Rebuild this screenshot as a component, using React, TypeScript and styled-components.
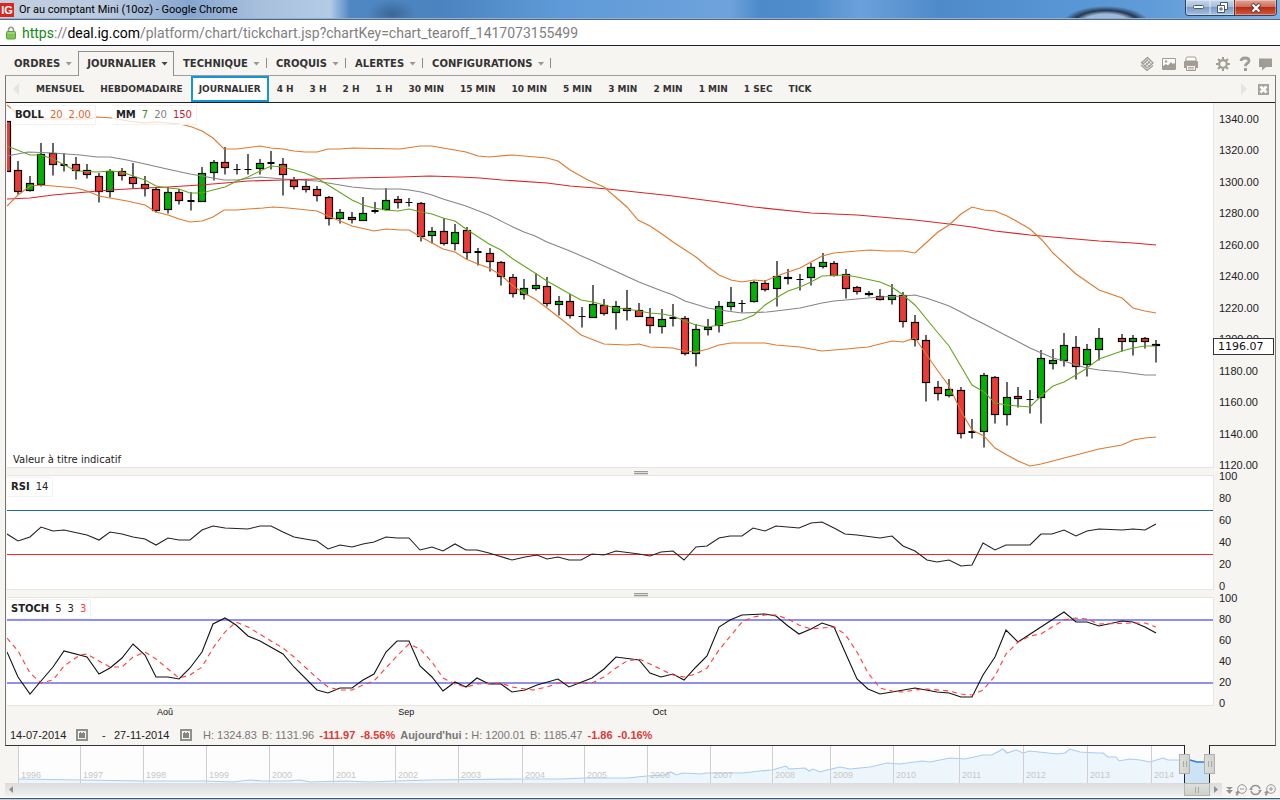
import React from "react";
import styled, { createGlobalStyle } from "styled-components";

const sans = `"Liberation Sans", Arial, sans-serif`;
const wide = `"DejaVu Sans", Verdana, sans-serif`;
const chrome = `Roboto, "Segoe UI", sans-serif`;
const paper = "#f7f5f2";
const iconGrey = "#a19d95";

const GlobalStyle = createGlobalStyle`
  * { box-sizing: border-box; }
  html, body { margin: 0; padding: 0; background: ${paper}; }
  button { background: none; border: 0; padding: 0; margin: 0; color: inherit; font: inherit; cursor: pointer; }
  svg { display: block; }
`;

const Window = styled.div`
  display: flex;
  flex-direction: column;
  min-height: 100vh;
  background: ${paper};
  font-family: ${sans};
  font-size: 11px;
  color: #222;
`;

/* ---------- browser chrome ---------- */

const TitleBar = styled.header`
  display: flex;
  align-items: flex-start;
  height: 20px;
  border-bottom: 1px solid #56667e;
  box-shadow: inset 0 -1px 0 #8fb0d8;
  background:
    radial-gradient(ellipse 44px 18px at 1106px 24px, #9dbbdc 0 55%, #26384f 75%, transparent 100%) no-repeat,
    radial-gradient(ellipse 24px 14px at 392px 14px, #3b6796 0, transparent 100%) no-repeat,
    linear-gradient(90deg, #c3d0e0 0, #b9c9de 110px, #86a5cf 190px, #a9c0dd 260px, #b4cbe6 330px, #4f87c2 350px, #4a83bf 440px,
      #5f9ad8 560px, #6ea3dc 730px, #4d8ac9 760px, #4f8dcc 810px, #6ba1db 860px, #4e8aca 940px, #5795d5 1060px, #5f9bd8 1150px, #80b2e4 100%);
`;

const Logo = styled.span`
  width: 14px;
  height: 14px;
  margin-top: 3px;
  background: #d8281d;
  color: #fff;
  font: bold 11px/14px ${sans};
  text-align: center;
`;

const Title = styled.h1`
  flex: 1;
  margin: 0;
  padding-left: 5px;
  font: 11px/19px ${chrome};
  color: #000;
  white-space: nowrap;
`;

const WindowButtons = styled.div`
  display: flex;
  height: 16px;
  margin-right: 3px;
  border: 1px solid #33435a;
  border-top: 0;
  border-radius: 0 0 4px 4px;
  overflow: hidden;
`;

const WindowButton = styled.button<{ $close?: boolean }>`
  display: flex;
  align-items: center;
  justify-content: center;
  width: ${(p) => (p.$close ? 42 : 24)}px;
  height: 15px;
  border-left: ${(p) => (p.$close ? "1px solid #7a2b22" : "0")};
  box-shadow: inset 0 0 0 1px rgba(255, 255, 255, 0.35);
  background: ${(p) =>
    p.$close
      ? "linear-gradient(#e0a596 0, #cf6e5b 45%, #b52e16 50%, #d35a3e 100%)"
      : "linear-gradient(#c7d8ec 0, #a5bedb 45%, #7c9cc2 50%, #a2c1e2 100%)"};
`;

const AddressBar = styled.div`
  display: flex;
  align-items: center;
  gap: 6px;
  height: 26px;
  padding-left: 6px;
  background: #fff;
  border-bottom: 1px solid #1d222c;
`;

const Url = styled.div`
  font: 14px/24px ${chrome};
  color: #808080;
  white-space: nowrap;
  b { font-weight: 400; color: #000; }
  em { font-style: normal; color: #128a12; }
`;

/* ---------- menus ---------- */

const MenuBar = styled.nav`
  display: flex;
  align-items: flex-end;
  height: 30px;
  padding: 0 7px 0 5px;
  margin-bottom: -1px;
  position: relative;
  font: bold 10px/23px ${wide};
  color: #333;
`;

const MenuItem = styled.button<{ $active?: boolean }>`
  display: flex;
  align-items: center;
  gap: 5px;
  padding: 0 5px 0 8px;
  border: 1px solid ${(p) => (p.$active ? "#8c918a" : "transparent")};
  border-bottom: 0;
  background: ${paper};
  height: ${(p) => (p.$active ? 25 : 24)}px;
  margin-bottom: ${(p) => (p.$active ? 0 : 1)}px;
  padding-bottom: ${(p) => (p.$active ? 1 : 0)}px;
`;

const Caret = styled.span<{ $dark?: boolean }>`
  width: 7px;
  height: 4px;
  background: ${(p) => (p.$dark ? "#444" : "#9a978f")};
  clip-path: polygon(0 0, 100% 0, 50% 100%);
`;

const MenuDivider = styled.span`
  width: 1px;
  height: 10px;
  margin-bottom: 8px;
  background: #8d8d86;
`;

const Tools = styled.div`
  display: flex;
  align-items: center;
  gap: 6px;
  height: 24px;
  margin-left: auto;
  color: ${iconGrey};
`;

const ToolGroup = styled.div`
  display: flex;
  gap: 6px;
  & + & { margin-left: 10px; }
`;

const Panel = styled.main`
  display: flex;
  flex-direction: column;
  flex: 1;
  margin: 0 4px 0 5px;
  border: 1px solid #777;
  border-top-color: #9a9d98;
  border-bottom-color: #333;
`;

const IntervalBar = styled.div`
  display: flex;
  align-items: center;
  height: 27px;
  border-bottom: 1px solid #222;
  padding-right: 5px;
  font: bold 9px/20px ${wide};
  color: #333;
`;

const Interval = styled.button<{ $active?: boolean }>`
  height: 26px;
  padding: 0 ${(p) => (p.$active ? 6 : 8)}px;
  border: ${(p) => (p.$active ? "2px solid #1596d4" : "0")};
  background: ${(p) => (p.$active ? "#fff" : "none")};
  white-space: nowrap;
`;

const Scroller = styled.button<{ $dir: "left" | "right" }>`
  width: 6px;
  height: 12px;
  margin: ${(p) => (p.$dir === "left" ? "0 9px 0 7px" : "0 10px 0 auto")};
  background: #e6e4e0;
  clip-path: ${(p) =>
    p.$dir === "left" ? "polygon(100% 0, 0 50%, 100% 100%)" : "polygon(0 0, 100% 50%, 0 100%)"};
`;

/* ---------- charts ---------- */

const Charts = styled.section`
  display: flex;
  flex: 1;
  padding-left: 1px;
`;

const Plots = styled.div`
  display: flex;
  flex-direction: column;
  flex: 1;
  min-width: 0;
`;

const Plot = styled.div<{ $height: number; $grow?: boolean }>`
  position: relative;
  display: flex;
  flex: ${(p) => (p.$grow ? 1 : 0)} 0 ${(p) => p.$height}px;
  background: #fff;
  border: 1px solid #e6e5e2;
  border-left: 0;
  border-top-width: ${(p) => (p.$grow ? 0 : 1)}px;
`;

const Canvas = styled.svg`
  flex: 1;
  width: 100%;
  height: auto;
  min-width: 0;
`;

const Splitter = styled.div`
  display: flex;
  align-items: center;
  justify-content: center;
  height: 7px;
  padding: 4px 0 0 61px;
`;

const Grip = styled.span`
  width: 14px;
  height: 5px;
  background: repeating-linear-gradient(#999 0 1px, #ddd 1px 2px);
`;

const Legends = styled.div<{ $inset?: boolean }>`
  position: absolute;
  top: ${(p) => (p.$inset ? 2 : 1)}px;
  left: ${(p) => (p.$inset ? 4 : 0)}px;
  display: flex;
  gap: 16px;
`;

const Legend = styled.div`
  display: flex;
  gap: 6px;
  padding: 0 4px;
  border: 1px solid #f5f3f0;
  border-left: 0;
  background: rgba(255, 255, 255, 0.75);
  font: 10px/18px ${wide};
  color: #222;
`;

const Value = styled.span<{ $color?: string }>`
  color: ${(p) => p.$color ?? "#222"};
`;

const Note = styled.p`
  position: absolute;
  left: 6px;
  bottom: 1px;
  margin: 0;
  font: 10px/13px ${wide};
  color: #222;
`;

const Months = styled.div`
  display: grid;
  grid-template-columns: 150fr 241fr 254fr 561fr;
  height: 13px;
  font: 9px/13px ${sans};
  color: #111;
  span:first-child { grid-column: 2; }
`;

const Axes = styled.div`
  display: flex;
  flex-direction: column;
  flex: 0 0 61px;
  padding-bottom: 11px;
`;

const Axis = styled.div<{ $height?: number; $gap: number }>`
  position: relative;
  display: flex;
  flex-direction: column;
  justify-content: space-between;
  flex: ${(p) => (p.$height ? `0 0 ${p.$height}px` : "1")};
  padding: ${(p) => p.$gap}px 0 0 5px;
  font: 11px/10px ${sans};
  color: #222;
`;

const LastPrice = styled.output`
  position: absolute;
  top: 64%;
  left: -1px;
  right: 1px;
  height: 17px;
  padding-left: 4px;
  border: 1px solid #333;
  background: #fff;
  font: 11px/16px ${wide};
  color: #111;
`;

const InfoBar = styled.footer`
  display: flex;
  align-items: center;
  height: 26px;
  padding: 6px 0 0 4px;
  font: 11px/20px ${sans};
  color: #777;
  white-space: pre;
`;

const DateInput = styled.input`
  width: 58px;
  padding: 0;
  border: 0;
  background: none;
  font: 11px/20px ${sans};
  color: #222;
`;

const CalendarButton = styled.button`
  margin-left: 8px;
`;

const Dash = styled.span`
  width: 26px;
  padding-left: 14px;
  color: #222;
`;

const Figures = styled.div`
  display: flex;
  gap: 5px;
  margin-left: 11px;
`;

const Loss = styled.b`
  color: #dc3a38;
`;

/* ---------- navigator ---------- */

const Navigator = styled.div`
  display: flex;
  height: 37px;
  padding: 0 70px 0 18px;
`;

const History = styled.div`
  position: relative;
  flex: 1;
  display: grid;
  grid-template-columns: 62fr 63fr 63fr 63fr 64fr 62fr 63fr 64fr 62fr 63fr 63fr 62fr 58fr 63fr 66fr 64fr 64fr 64fr 33fr;
  background: #fdfdfd;
`;

const Trend = styled.svg`
  position: absolute;
  inset: 0;
  width: 100%;
  height: 100%;
`;

const Year = styled.span`
  position: relative;
  display: flex;
  align-items: flex-end;
  min-width: 0;
  padding: 0 0 1px 2px;
  border-left: 1px solid #cfcfcf;
  font: 9px/14px ${sans};
  color: #c6c6c6;
`;

const Selection = styled.div`
  position: relative;
  width: 26px;
  margin-top: -1px;
  background: ${paper};
  border: solid #222;
  border-width: 0 1px;
`;

const Handle = styled.span<{ $end?: boolean }>`
  position: absolute;
  top: 9px;
  left: ${(p) => (p.$end ? 19 : -6)}px;
  width: 11px;
  height: 20px;
  border: 1px solid #b0b0ac;
  background: linear-gradient(90deg, #a9aba7 0 1px, transparent 1px 3px, #a9aba7 3px 4px) 3px 6px / 4px 6px no-repeat,
    linear-gradient(90deg, #deded9, #cfd2cc);
`;

const ScrollRow = styled.div`
  display: flex;
  height: 13px;
  padding-left: 5px;
`;

const Track = styled.div`
  display: flex;
  flex: 1;
  align-items: center;
  background: linear-gradient(#dcdcdc, #efefef);
`;

const Arrow = styled.button<{ $right?: boolean }>`
  width: 4px;
  height: 7px;
  margin: 0 4px;
  background: #8f8f8b;
  clip-path: ${(p) => (p.$right ? "polygon(0 0, 100% 50%, 0 100%)" : "polygon(100% 0, 0 50%, 100% 100%)")};
`;

const Thumb = styled.div`
  width: 26px;
  height: 13px;
  margin-left: auto;
  border: 1px solid #b4b4b0;
  background: linear-gradient(90deg, #a9aba7 0 1px, transparent 1px 3px, #a9aba7 3px 4px) 10px 3px / 4px 6px no-repeat,
    linear-gradient(#dfe0db, #cfd1cb);
`;

const ZoomTools = styled.div`
  display: flex;
  align-items: center;
  justify-content: space-between;
  width: 58px;
  padding: 0 4px 0 4px;
  color: #96968f;
`;

const BottomEdge = styled.div`
  height: 4px;
  margin-top: 1px;
  border-top: 1px solid #fff;
  background: linear-gradient(#48566c 0 1px, #b9cfe9 1px);
`;

/* ---------- data ---------- */

type Candle = [number, number, number, number, "r" | "g" | "d"] | null;

const candles: Candle[] = [
  [121, 121, 171, 171, "r"], [161, 170, 191, 194, "r"], [176, 183, 190, 191, "g"], [143, 154, 184, 186, "g"],
  [143, 153, 164, 175, "r"], [153, 164, 165, 171, "d"], [157, 164, 170, 179, "r"], [164, 170, 174, 178, "r"],
  [173, 176, 191, 202, "r"], [169, 171, 191, 197, "g"], [168, 171, 175, 180, "r"], [163, 177, 183, 188, "r"],
  [176, 184, 188, 196, "r"], [187, 189, 210, 212, "r"], [187, 192, 209, 213, "g"], [189, 192, 200, 204, "r"],
  [192, 200, 201, 210, "d"], [167, 173, 201, 201, "g"], [160, 162, 172, 180, "g"], [147, 162, 167, 174, "r"],
  [164, 169, 169, 174, "d"], [154, 169, 169, 174, "d"], [159, 163, 168, 174, "g"], [151, 162, 163, 169, "d"],
  [158, 164, 174, 195, "r"], [177, 180, 186, 189, "r"], [179, 186, 189, 192, "r"], [186, 189, 195, 201, "r"],
  [196, 197, 218, 225, "r"], [209, 212, 218, 223, "g"], [212, 217, 219, 223, "r"], [197, 213, 220, 220, "g"],
  [202, 210, 211, 213, "d"], [188, 200, 209, 210, "g"], [196, 199, 202, 208, "r"], [198, 202, 202, 206, "d"],
  [202, 203, 236, 241, "r"], [227, 231, 235, 243, "g"], [218, 231, 243, 245, "r"], [224, 232, 243, 250, "g"],
  [227, 230, 252, 259, "r"], [248, 251, 252, 265, "d"], [248, 253, 261, 271, "r"], [261, 262, 276, 285, "r"],
  [274, 277, 293, 297, "r"], [279, 288, 294, 299, "g"], [273, 285, 288, 290, "g"], [277, 286, 303, 306, "r"],
  [296, 301, 304, 315, "g"], [294, 301, 315, 318, "r"], [307, 316, 316, 327, "d"], [285, 304, 317, 317, "g"],
  [299, 305, 313, 315, "r"], [301, 306, 312, 329, "g"], [290, 308, 310, 320, "r"], [303, 310, 316, 316, "r"],
  [308, 317, 325, 333, "r"], [309, 319, 326, 333, "g"], [304, 317, 318, 326, "d"], [316, 318, 353, 355, "r"],
  [324, 329, 353, 366, "g"], [319, 327, 329, 335, "g"], [301, 306, 325, 332, "g"], [287, 302, 306, 310, "g"],
  [300, 303, 303, 312, "d"], [281, 282, 301, 302, "g"], [280, 283, 289, 291, "r"], [261, 276, 288, 306, "g"],
  [269, 277, 278, 284, "r"], [274, 279, 279, 290, "d"], [263, 267, 277, 285, "g"], [253, 262, 266, 268, "g"],
  [261, 263, 275, 276, "r"], [269, 274, 288, 298, "r"], [286, 287, 291, 294, "r"], [291, 293, 294, 296, "r"],
  [289, 296, 299, 300, "r"], [284, 295, 299, 304, "g"], [292, 295, 321, 327, "r"], [315, 322, 339, 346, "r"],
  [335, 340, 382, 401, "r"], [381, 387, 393, 400, "r"], [379, 389, 395, 397, "g"], [387, 390, 433, 438, "r"],
  [419, 431, 432, 438, "d"], [373, 375, 431, 447, "g"], [376, 377, 414, 423, "r"], [382, 397, 414, 425, "g"],
  [387, 396, 398, 407, "r"], [390, 399, 399, 413, "d"], [350, 358, 397, 423, "g"], [349, 360, 363, 369, "g"],
  [333, 345, 360, 366, "g"], [336, 347, 366, 379, "r"], [344, 349, 364, 376, "g"], [328, 338, 349, 360, "g"],
  null, [334, 338, 341, 351, "r"], [335, 338, 341, 355, "g"], [337, 338, 341, 348, "r"], [340, 344, 345, 362, "r"],
];

const bandUpper =
  "7,105 17,113 30,119 88,119 97,117 112,118 128,121 145,123 157,122 180,124 192,127 202,131 213,138 224,149 237,149 260,146 271,148 283,149 294,151 305,152 317,152 328,149 340,149 353,148 400,149 420,146 432,146 443,148 466,152 478,156 489,157 512,155 524,156 547,158 558,161 570,170 588,180 604,187 627,207 638,220 650,226 662,234 673,242 696,257 708,267 719,275 731,280 742,282 754,280 765,281 777,276 788,272 800,268 811,262 822,256 834,253 857,251 870,250 885,251 903,251 915,253 927,242 938,232 949,225 961,214 972,207 984,210 995,211 1007,216 1018,222 1030,229 1042,240 1053,253 1076,274 1099,290 1122,298 1133,308 1145,311 1156,313";
const bandLower =
  "7,206 18,195 30,186 41,185 53,186 76,188 87,191 99,196 110,198 127,201 145,205 156,212 168,215 179,219 190,222 202,221 213,217 224,210 237,210 248,209 263,208 273,207 288,208 317,211 328,216 340,221 352,226 374,231 386,229 400,230 409,230 421,237 432,243 443,249 455,252 466,259 478,264 489,268 501,275 513,286 524,293 535,299 547,308 570,326 581,335 604,344 627,345 639,344 650,347 673,348 685,351 696,352 708,349 719,345 731,343 742,343 754,343 765,343 776,345 800,347 822,351 846,349 868,347 892,341 903,342 915,338 926,354 938,371 949,386 961,411 972,430 984,436 995,448 1007,455 1018,461 1030,466 1041,464 1053,461 1064,458 1076,455 1099,449 1122,445 1133,440 1145,438 1156,437";
const ma7 =
  "7,146 30,155 41,155 53,159 76,171 97,172 110,171 122,172 133,176 145,180 156,186 168,188 179,189 190,193 202,193 213,190 225,187 237,181 248,177 260,171 271,166 283,167 305,173 317,178 328,185 352,200 363,205 374,208 386,210 398,211 409,209 421,212 432,214 443,218 455,221 466,229 489,244 501,250 513,259 535,273 547,281 570,294 581,300 593,302 615,308 627,309 639,311 650,313 662,314 673,316 685,321 696,325 708,327 719,325 731,322 742,320 754,315 765,305 776,298 788,291 800,287 811,282 822,276 846,275 857,277 880,282 892,287 903,295 915,305 938,333 949,346 972,385 984,392 995,403 1007,405 1030,407 1041,396 1053,386 1064,382 1076,375 1087,368 1099,359 1122,351 1133,348 1145,346 1156,346";
const ma20 =
  "7,156 28,152 53,153 80,155 97,157 110,157 127,160 145,164 167,169 190,174 202,176 213,178 224,180 237,180 260,177 283,179 317,181 328,183 352,187 374,189 400,189 409,190 421,192 432,195 443,199 466,206 489,215 513,227 524,232 535,236 547,242 570,251 593,261 615,271 639,282 662,291 673,295 685,301 708,308 719,310 742,313 767,312 776,311 800,308 822,303 834,301 857,299 880,297 903,296 915,295 926,298 938,302 949,306 961,312 972,318 984,324 1007,336 1030,348 1053,358 1064,361 1076,365 1087,368 1099,370 1122,372 1145,375 1156,375";
const ma150 =
  "7,199 30,198 53,195 87,192 110,190 145,188 168,187 200,185 225,183 248,181 283,180 317,179 352,178 400,177 430,176 460,177 480,178 502,180 547,183 570,186 608,189 673,196 719,202 754,207 811,213 857,215 915,220 949,224 972,227 995,231 1030,235 1064,238 1099,241 1133,243 1156,245";
const rsi =
  "7,534 18,541 30,537 41,527 53,531 64,530 87,535 99,540 110,532 122,534 133,537 145,539 156,545 168,538 179,540 190,540 202,530 213,526 225,528 248,529 260,526 271,526 283,532 294,537 305,539 317,541 328,549 340,545 352,547 363,544 374,542 386,537 397,538 409,538 420,550 432,547 443,551 455,544 466,550 477,550 489,553 512,560 525,557 537,555 547,559 558,557 569,560 581,560 592,554 604,555 616,551 639,554 650,556 661,552 673,551 684,560 696,547 707,546 719,538 730,536 742,536 753,528 765,531 776,526 799,528 811,523 822,522 834,528 845,534 857,535 880,538 892,536 903,546 915,551 927,560 937,562 949,560 961,566 972,565 983,543 995,550 1006,545 1030,545 1041,534 1052,534 1064,530 1076,536 1087,531 1099,529 1122,530 1133,529 1145,530 1156,524";
const stochK =
  "7,652 18,677 30,694 41,681 53,667 64,651 87,657 99,674 110,668 122,658 133,644 145,655 156,677 168,677 179,679 190,668 202,652 213,624 225,618 236,625 248,636 260,641 283,654 294,667 317,690 328,693 340,688 352,688 363,680 374,674 386,652 397,641 409,641 420,666 432,677 443,691 455,682 466,687 477,678 489,684 501,684 512,692 525,690 537,685 558,679 569,687 592,678 604,669 616,657 639,660 650,673 661,677 673,674 684,680 696,667 707,656 719,627 730,620 742,615 765,614 776,616 788,626 799,634 811,629 822,623 834,627 845,652 857,679 868,689 880,694 892,692 915,688 937,692 949,693 961,697 972,697 983,675 995,657 1006,630 1018,642 1064,612 1076,622 1087,622 1099,626 1122,621 1133,622 1145,627 1156,633";
const stochD =
  "7,638 18,651 30,673 41,683 53,680 64,666 80,655 87,654 99,661 110,667 122,667 133,657 145,652 156,659 168,669 179,678 190,675 202,667 213,648 225,632 236,622 248,627 271,641 283,648 294,657 305,667 317,678 328,687 340,690 352,690 363,685 374,681 397,656 409,644 420,649 432,662 443,678 455,684 466,687 477,684 501,683 512,687 533,690 547,687 558,683 592,683 604,677 616,668 627,661 639,659 650,664 673,675 684,677 696,674 707,668 719,650 742,622 753,617 765,615 776,615 788,619 799,625 811,629 834,627 845,634 857,652 868,673 880,688 892,691 903,692 915,690 927,689 949,691 961,694 972,695 983,690 995,676 1006,654 1018,642 1030,636 1041,634 1052,627 1064,620 1076,618 1087,619 1099,624 1133,623 1145,623 1156,627";
const trend =
  "18,779 80,780 143,781 206,781 233,782 250,780 262,781 287,781 300,780 310,782 345,781 370,782 395,781 430,780 522,779 563,779 584,778 627,778 647,776 665,775 671,772 676,775 683,773 700,774 707,773 743,773 760,771 772,770 786,766 789,769 805,768 809,771 813,769 820,772 827,770 840,767 850,769 870,767 887,763 900,764 922,761 930,762 950,758 965,759 983,755 992,755 1003,749 1007,753 1016,750 1023,753 1030,751 1057,754 1065,753 1070,749 1080,752 1097,753 1103,753 1108,757 1116,757 1119,761 1130,759 1140,760 1150,762 1163,758 1168,760 1184,760";

const menus = ["ORDRES", "JOURNALIER", "TECHNIQUE", "CROQUIS", "ALERTES", "CONFIGURATIONS"];
const intervals = [
  "MENSUEL", "HEBDOMADAIRE", "JOURNALIER", "4 H", "3 H", "2 H", "1 H", "30 MIN", "15 MIN", "10 MIN",
  "5 MIN", "3 MIN", "2 MIN", "1 MIN", "1 SEC", "TICK",
];
const prices = Array.from({ length: 12 }, (_, i) => (1340 - 20 * i).toFixed(2));
const percents = [100, 80, 60, 40, 20, 0];
const years = Array.from({ length: 19 }, (_, i) => 1996 + i);

/* ---------- drawings ---------- */

const Line = ({ points, color, dash }: { points: string; color: string; dash?: string }) => (
  <polyline points={points} fill="none" stroke={color} strokeWidth={1.1} strokeDasharray={dash} vectorEffect="non-scaling-stroke" />
);

const CandleMark = ({ index, data }: { index: number; data: Candle }) => {
  if (!data) return null;
  const [high, top, bottom, low, kind] = data;
  const x = Math.round(7 + index * 11.49) - 0.5;
  return (
    <g stroke="#000" strokeWidth={1.2}>
      <path d={`M${x + 0.5} ${high}V${low + 0.5}`} />
      {kind === "d" ? (
        <path d={`M${x - 3} ${(top + bottom) / 2 + 0.5}h7`} strokeWidth={bottom - top + 1} />
      ) : (
        <rect x={x - 3} y={top + 0.5} width={7} height={Math.max(bottom - top, 1)} fill={kind === "r" ? "#ee3a34" : "#00b300"} />
      )}
    </g>
  );
};

const LayersIcon = () => (
  <svg width="16" height="16" viewBox="0 0 16 16" fill="none" stroke="currentColor">
    <path d="M3 6.500L8.500 1.500L14 7L8 12L5 9.500M2 6L8 12M2 9l6 5.500 6-5M4 8l5-4.500M6 10l5-4.500" strokeWidth="1.300" />
    <path d="M6 6l5 5M8 4l4 4.500" strokeWidth="1" />
  </svg>
);
const PictureIcon = () => (
  <svg width="16" height="16" viewBox="0 0 16 16">
    <path d="M1.500 2.500h13v11h-13z" fill="#fdfdfc" stroke="currentColor" />
    <path d="M2 13V10l3-2 2 1.500 3-3.500 1.500 2L13 7l1.500 1.500V13z" fill="currentColor" />
    <circle cx="5" cy="5.500" r="1.200" fill="currentColor" />
  </svg>
);
const PrinterIcon = () => (
  <svg width="16" height="16" viewBox="0 0 16 16" fill="currentColor">
    <path d="M4 1h8l1 1v3H3V2z" fill="#fff" stroke="currentColor" strokeWidth="1" />
    <path d="M2 5h12q1 0 1 1v6h-2V9H3v3H1V6q0-1 1-1z" />
    <path d="M3.500 9.500h9v5h-9z" fill="#f4f3f0" stroke="currentColor" />
    <path d="M5 11.500h6M5 13h6" stroke="currentColor" strokeWidth="0.800" />
  </svg>
);
const GearIcon = () => (
  <svg width="16" height="16" viewBox="0 0 16 16" fill="none" stroke="currentColor">
    <circle cx="8" cy="8" r="3.800" strokeWidth="2.200" />
    <path d="M8 1v2.500M8 12.500V15M1 8h2.500M12.500 8H15M3 3l2 2M11 11l2 2M13 3l-2 2M5 11l-2 2" strokeWidth="2" />
  </svg>
);
const HelpIcon = () => (
  <svg width="16" height="16" viewBox="0 0 16 16" fill="none" stroke="currentColor">
    <path d="M4 5Q4 2 8 2t4 2.800Q12 6.500 9.800 7.800 8.500 8.600 8.500 10.300" strokeWidth="2.800" />
    <path d="M7 13.500h3" strokeWidth="3" />
  </svg>
);
const SpeechIcon = () => (
  <svg width="14" height="16" viewBox="0 0 14 16" fill="currentColor">
    <path d="M0 2.500h13v8.500H7L3 14.500V11H0z" />
  </svg>
);
const CloseBoxIcon = () => (
  <svg width="13" height="13" viewBox="0 0 13 13">
    <path d="M1 1h11v11H1z" fill="#a2a69d" />
    <path d="M3.500 3.500l6 6M9.500 3.500l-6 6" stroke="#fff" strokeWidth="2.800" />
  </svg>
);
const CalendarIcon = () => (
  <svg width="12" height="12" viewBox="0 0 12 12">
    <path d="M1 1h10v10H1z" fill="#f4f4f2" stroke="#8f8f8b" strokeWidth="2" />
    <path d="M3 4h6v5H3zM4 3h1v1H4zM7 3h1v1H7z" fill="#85857e" />
  </svg>
);
const MagnifierIcon = ({ plus }: { plus?: boolean }) => (
  <svg width="12" height="12" viewBox="0 0 12 12" fill="none" stroke="currentColor">
    <circle cx="7" cy="5" r="4.300" />
    <path d="M4.500 8L1 11M0.500 8.500h4M2.500 7v4.500" strokeWidth="1.400" />
    <path d={plus ? "M5 5h4M7 3v4" : "M5 5h4"} />
  </svg>
);

export default function App() {
  return (
    <Window>
      <GlobalStyle />
      <TitleBar>
        <Logo>IG</Logo>
        <Title>Or au comptant Mini (10oz) - Google Chrome</Title>
        <WindowButtons>
          <WindowButton aria-label="Réduire">
            <svg width="11" height="5"><rect x="0.500" y="0.500" width="10" height="3" rx="1" fill="#fff" stroke="#48566a" /></svg>
          </WindowButton>
          <WindowButton aria-label="Restaurer">
            <svg width="12" height="12" fill="#fff" stroke="#48566a">
              <path d="M4.500 0.500h7v7h-7z" />
              <path d="M1.500 3.500h7v7h-7z" />
              <path d="M4 6h2v2H4z" />
            </svg>
          </WindowButton>
          <WindowButton $close aria-label="Fermer">
            <svg width="12" height="10">
              <path d="M2 1l8 8M10 1L2 9" stroke="#5b3a40" strokeWidth="4" />
              <path d="M2.500 1.500l7 7M9.500 1.500l-7 7" stroke="#fff" strokeWidth="2.200" />
            </svg>
          </WindowButton>
        </WindowButtons>
      </TitleBar>
      <AddressBar>
        <svg width="10" height="14" viewBox="0 0 10 14">
          <path d="M2.500 7V4a2.500 2.700 0 0 1 5 0v3" fill="none" stroke="#999" strokeWidth="1.600" />
          <rect x="0.500" y="5.500" width="9" height="7.500" rx="1" fill="#7cc653" stroke="#5c9e3c" />
          <path d="M1.500 7h7" stroke="#b9e69b" />
        </svg>
        <Url><em>https</em>://<b>deal.ig.com</b>/platform/chart/tickchart.jsp?chartKey=chart_tearoff_1417073155499</Url>
      </AddressBar>

      <MenuBar>
        {menus.map((name, i) => (
          <React.Fragment key={name}>
            <MenuItem $active={i === 1}>{name}<Caret $dark={i === 1} /></MenuItem>
            {i > 1 && <MenuDivider />}
          </React.Fragment>
        ))}
        <Tools>
          <ToolGroup>
            <button aria-label="Calques"><LayersIcon /></button>
            <button aria-label="Image"><PictureIcon /></button>
            <button aria-label="Imprimer"><PrinterIcon /></button>
          </ToolGroup>
          <ToolGroup>
            <button aria-label="Paramètres"><GearIcon /></button>
            <button aria-label="Aide"><HelpIcon /></button>
            <button aria-label="Commentaire"><SpeechIcon /></button>
          </ToolGroup>
        </Tools>
      </MenuBar>

      <Panel>
        <IntervalBar>
          <Scroller $dir="left" aria-label="Précédent" />
          {intervals.map((name) => (
            <Interval key={name} $active={name === "JOURNALIER"}>{name}</Interval>
          ))}
          <Scroller $dir="right" aria-label="Suivant" />
          <button aria-label="Fermer la barre"><CloseBoxIcon /></button>
        </IntervalBar>

        <Charts>
          <Plots>
            <Plot $height={365} $grow>
              <Canvas viewBox="7 103 1206 364" preserveAspectRatio="none">
                {candles.map((c, i) => <CandleMark key={i} index={i} data={c} />)}
                <Line points={ma20} color="#858585" />
                <Line points={ma150} color="#d9252a" />
                <Line points={bandUpper} color="#dd7a2e" />
                <Line points={bandLower} color="#dd7a2e" />
                <Line points={ma7} color="#67a51e" />
              </Canvas>
              <Legends $inset>
                <Legend>
                  <b>BOLL</b><Value $color="#d9692a">20</Value><Value $color="#d9692a">2.00</Value>
                </Legend>
                <Legend>
                  <b>MM</b><Value $color="#3f8a1c">7</Value><Value $color="#808080">20</Value><Value $color="#c9202c">150</Value>
                </Legend>
              </Legends>
              <Note>Valeur à titre indicatif</Note>
            </Plot>
            <Splitter><Grip /></Splitter>
            <Plot $height={115}>
              <Canvas viewBox="7 476 1206 113" preserveAspectRatio="none">
                <Line points="7,510.5 1213,510.5" color="#1f6f8f" />
                <Line points="7,554.5 1213,554.5" color="#ff2222" />
                <Line points={rsi} color="#222" />
              </Canvas>
              <Legends>
                <Legend><b>RSI</b><Value>14</Value></Legend>
              </Legends>
            </Plot>
            <Splitter><Grip /></Splitter>
            <Plot $height={109}>
              <Canvas viewBox="7 598 1206 107" preserveAspectRatio="none">
                <path d="M7 620h1206M7 683h1206" stroke="#8f8fee" strokeWidth="2" />
                <Line points={stochK} color="#111" />
                <Line points={stochD} color="#ff3b3b" dash="5 4" />
              </Canvas>
              <Legends>
                <Legend><b>STOCH</b><Value>5</Value><Value>3</Value><Value $color="#ff3b3b">3</Value></Legend>
              </Legends>
            </Plot>
            <Months><span>Aoû</span><span>Sep</span><span>Oct</span></Months>
          </Plots>
          <Axes>
            <Axis $gap={11}>
              {prices.map((p) => <span key={p}>{p}</span>)}
              <LastPrice>1196.07</LastPrice>
            </Axis>
            <Axis $gap={1} $height={121}>{percents.map((p) => <span key={p}>{p}</span>)}</Axis>
            <Axis $gap={2} $height={117}>{percents.map((p) => <span key={p}>{p}</span>)}</Axis>
          </Axes>
        </Charts>

        <InfoBar>
          <DateInput defaultValue="14-07-2014" aria-label="Date de début" />
          <CalendarButton aria-label="Choisir la date de début"><CalendarIcon /></CalendarButton>
          <Dash>-</Dash>
          <DateInput defaultValue="27-11-2014" aria-label="Date de fin" />
          <CalendarButton aria-label="Choisir la date de fin"><CalendarIcon /></CalendarButton>
          <Figures>
            <span>H: 1324.83</span><span>B: 1131.96</span><Loss>-111.97</Loss><Loss>-8.56%</Loss>
            <span><b>Aujourd'hui :</b> H: 1200.01</span>
            <span>B: 1185.47</span><Loss>-1.86</Loss><Loss>-0.16%</Loss>
          </Figures>
        </InfoBar>
      </Panel>

      <Navigator>
        <History>
          <Trend viewBox="18 746 1166 37" preserveAspectRatio="none">
            <polygon points={`${trend} 1184,783 18,783`} fill="#eef6fd" />
            <Line points={trend} color="#a9cdf0" />
          </Trend>
          {years.map((y) => <Year key={y}>{y}</Year>)}
        </History>
        <Selection>
          <svg width="24" height="38" viewBox="1185 745 24 38">
            <path d="M1185 760h5l7 2h12v21h-24z" fill="#cbe3f5" />
            <path d="M1185 760h5l7 2h12" fill="none" stroke="#2f7fd8" strokeWidth="1.500" />
          </svg>
          <Handle />
          <Handle $end />
        </Selection>
      </Navigator>
      <ScrollRow>
        <Track>
          <Arrow aria-label="Reculer" />
          <Thumb />
          <Arrow $right aria-label="Avancer" />
        </Track>
        <ZoomTools>
          <button aria-label="Replier">
            <svg width="7" height="8" fill="currentColor"><path d="M0 1h7L3.500 4zM0 4h7L3.500 8z" /></svg>
          </button>
          <button aria-label="Zoom arrière"><MagnifierIcon /></button>
          <button aria-label="Actualiser">
            <svg width="13" height="12" viewBox="0 0 13 12" fill="none" stroke="currentColor" strokeWidth="1.500">
              <path d="M2 5Q3 1.500 6.500 1.500T11 5M11 7Q10 10.500 6.500 10.500T2 7" />
              <path d="M0 6h4L2 3.500zM9 6h4l-2 2.500z" fill="currentColor" stroke="none" />
            </svg>
          </button>
          <button aria-label="Zoom avant"><MagnifierIcon plus /></button>
        </ZoomTools>
      </ScrollRow>
      <BottomEdge />
    </Window>
  );
}
